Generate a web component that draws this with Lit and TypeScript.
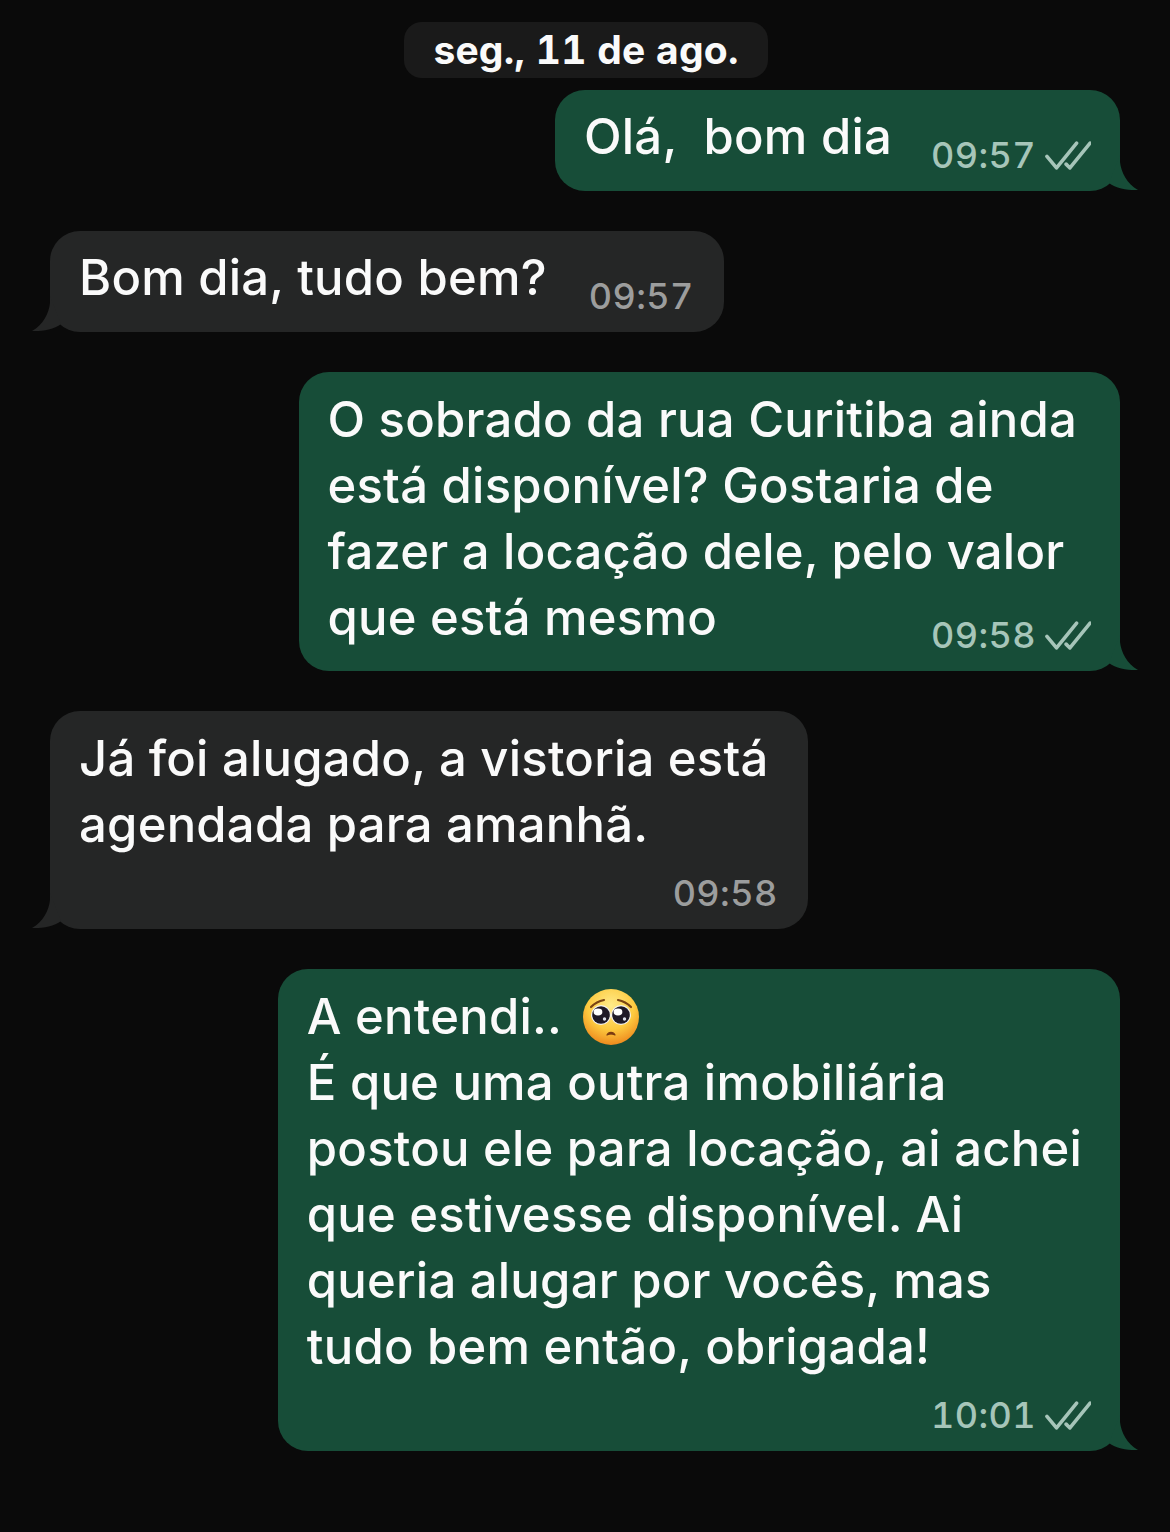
import { LitElement, html, css, svg } from "lit";
import { customElement } from "lit/decorators.js";

const checks = html`<svg class="checks" viewBox="0 0 48 32" width="46" height="31" fill="none" stroke="currentColor" stroke-width="3.7" stroke-linecap="round" stroke-linejoin="round">
  <path d="M2 17 L12 29 L33 3"/><path d="M22 25 L26 29 L47 3"/>
</svg>`;

const tail = svg`<path d="M20 5V12C21 22 27 34 38 40C30 40.5 16 39 9 33Z"/>`;

const emoji = html`<svg class="emoji" viewBox="0 0 58 58" width="58" height="58" aria-label="🥺">
  <defs>
    <radialGradient id="f" cx="50%" cy="30%" r="70%">
      <stop offset="0" stop-color="#ffeb8a"/><stop offset=".6" stop-color="#fdca3f"/><stop offset="1" stop-color="#ee8a1e"/>
    </radialGradient>
  </defs>
  <circle cx="29" cy="29" r="28" fill="url(#f)"/>
  <path d="M9 19C12 16 17 13 22 12M49 19C46 16 41 13 36 12" fill="none" stroke="#7a4413" stroke-width="2.2" stroke-linecap="round"/>
  <circle cx="19" cy="27" r="10" fill="#f4f2ee"/><circle cx="39" cy="27" r="10" fill="#f4f2ee"/>
  <circle cx="19" cy="27" r="8.8" fill="#1f1a28"/><circle cx="39" cy="27" r="8.8" fill="#1f1a28"/>
  <ellipse cx="16" cy="24" rx="4.4" ry="3.4" fill="#fff"/><ellipse cx="36" cy="24" rx="4.4" ry="3.4" fill="#fff"/>
  <circle cx="22.5" cy="31" r="1.7" fill="#dfe3ee"/><circle cx="42.5" cy="31" r="1.7" fill="#dfe3ee"/>
  <path d="M25 47C26.5 43.5 31.5 43.5 33 47C31 46 27 46 25 47Z" fill="#7a3a12" stroke="#7a3a12" stroke-width="1.2" stroke-linejoin="round"/>
</svg>`;

@customElement("app-root")
export class AppRoot extends LitElement {
  static styles = css`
    :host {
      display: block;
      width: 1170px;
      height: 1532px;
      background: #0a0a0a;
      font-family: Inter, "Liberation Sans", sans-serif;
      color: #fafafa;
      overflow: hidden;
    }
    .chat {
      display: flex;
      flex-direction: column;
      padding: 22px 50px 0;
      gap: 40px;
    }
    .date {
      align-self: center;
      height: 56px;
      width: 364px;
      margin-left: 2px;
      padding-bottom: 2px;
      box-sizing: border-box;
      border-radius: 18px;
      background: #1a1a1a;
      display: flex;
      align-items: center;
      justify-content: center;
      font-size: 39px;
      font-weight: 700;
      letter-spacing: 0.2px;
      font-variant-numeric: tabular-nums;
      margin-bottom: -28px;
    }
    .bubble {
      position: relative;
      border-radius: 30px;
      padding: 15px 30px 0 29px;
      font-size: 49px;
      font-weight: 500;
      letter-spacing: 0.22px;
      line-height: 66px;
      box-sizing: border-box;
    }
    .out { align-self: flex-end; background: #174d38; }
    .in { align-self: flex-start; background: #252626; }
    .text { white-space: pre; margin-right: 11px; }
    .m13 .text { margin-right: 13px; }
    .m9 .text { margin-right: 9px; }
    .m8 .text { margin-right: 8px; }
    .row { display: flex; align-items: flex-start; padding-bottom: 16px; }
    .row .text { margin-right: 0; }
    .row .meta { margin-top: 30px; margin-left: auto; }
    .first .text { margin-top: -1px; }
    .out .first .meta { margin-left: 39px; }
    .in .first .meta { margin-left: 42px; }
    .meta {
      display: flex;
      align-items: center;
      justify-content: flex-end;
      gap: 9px;
      height: 40px;
      font-size: 36px;
      line-height: 40px;
      letter-spacing: 0.4px;
      font-weight: 500;
      font-variant-numeric: tabular-nums;
    }
    .block > .meta { margin-top: 15px; margin-bottom: 16px; }
    .out .meta { color: #a6c5b9; }
    .in .meta { color: #9c9d9d; }
    .checks { flex: none; margin-right: -1px; }
    .tail {
      position: absolute;
      bottom: 0;
      width: 40px;
      height: 41px;
      overflow: visible;
    }
    .out .tail { right: -20px; fill: #174d38; }
    .in .tail { left: -20px; fill: #252626; transform: scaleX(-1); }
    .emoji { vertical-align: -12px; margin-left: 7px; }
  `;

  private tailEl() {
    return html`<svg class="tail" viewBox="0 0 40 41">${tail}</svg>`;
  }

  render() {
    return html`<div class="chat">
      <div class="date">seg., 11 de ago.</div>
      <div class="bubble out">
        <div class="row first">
          <div class="text">Olá,  bom dia</div>
          <div class="meta">09:57 ${checks}</div>
        </div>
        ${this.tailEl()}
      </div>
      <div class="bubble in">
        <div class="row first">
          <div class="text">Bom dia, tudo bem?</div>
          <div class="meta">09:57</div>
        </div>
        ${this.tailEl()}
      </div>
      <div class="bubble out m13">
        <div class="text">O sobrado da rua Curitiba ainda
está disponível? Gostaria de
fazer a locação dele, pelo valor</div>
        <div class="row">
          <div class="text">que está mesmo</div>
          <div class="meta">09:58 ${checks}</div>
        </div>
        ${this.tailEl()}
      </div>
      <div class="bubble in block m9">
        <div class="text">Já foi alugado, a vistoria está
agendada para amanhã.</div>
        <div class="meta">09:58</div>
        ${this.tailEl()}
      </div>
      <div class="bubble out block m8">
        <div class="text">A entendi.. ${emoji}
É que uma outra imobiliária
postou ele para locação, ai achei
que estivesse disponível. Ai
queria alugar por vocês, mas
tudo bem então, obrigada!</div>
        <div class="meta">10:01 ${checks}</div>
        ${this.tailEl()}
      </div>
    </div>`;
  }
}
